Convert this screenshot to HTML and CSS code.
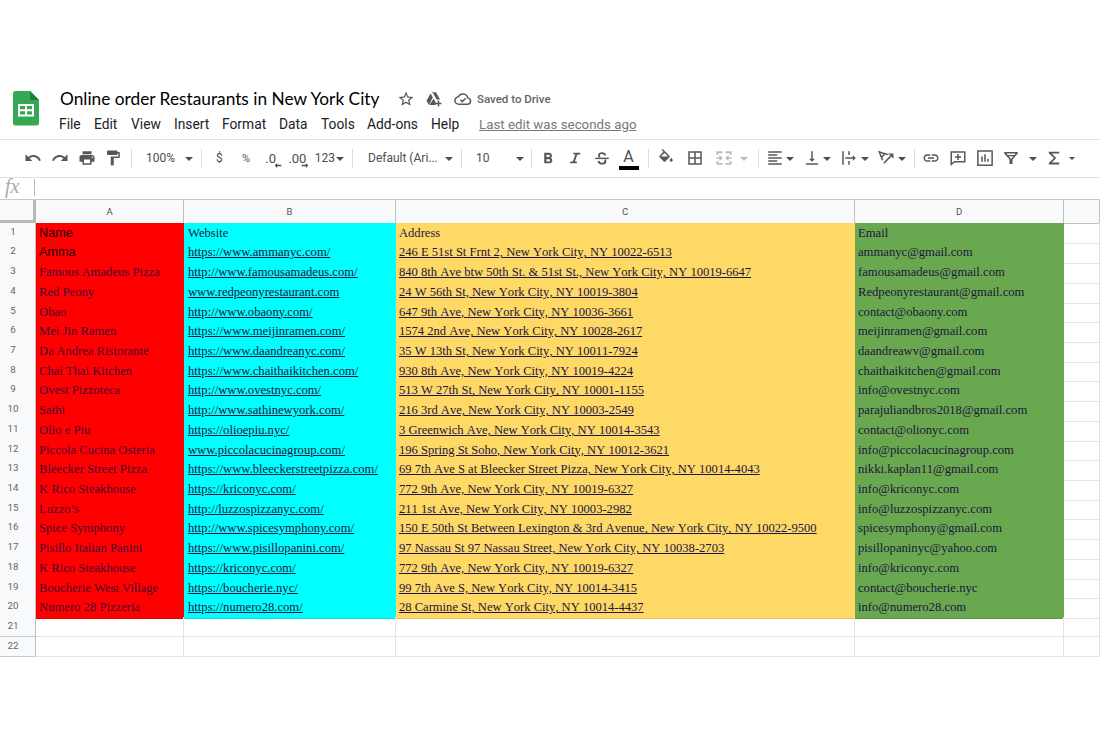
FILE: index.html
```html
<!DOCTYPE html>
<html lang="en">
<head>
    <meta charset="UTF-8">
    <meta name="viewport" content="width=device-width, initial-scale=1.0">
    <title>Online order Restaurants in New York City</title>
    <link rel="stylesheet" href="styles.css">
</head>
<body>
    <header class="doc-header">
        <svg class="logo" viewBox="0 0 26 35">
            <path fill="#34a853" d="M2.500 0H17l9 9v23a2.500 2.500 0 0 1-2.500 2.500h-21A2.500 2.500 0 0 1 0 32V2.500A2.500 2.500 0 0 1 2.500 0z"/>
            <path fill="#188038" d="M17 0l9 9h-7a2 2 0 0 1-2-2z"/>
            <path fill="#fff" fill-rule="evenodd" d="M5 13h16v12.500H5zM7 15v3.200h5V15zM14 15v3.200h5V15zM7 20.200v3.200h5v-3.200zM14 20.200v3.200h5v-3.200z"/>
        </svg>
        <div class="doc-info">
            <div class="title-row">
                <h1 class="title">Online order Restaurants in New York City</h1>
                <svg class="icon star" viewBox="0 0 24 24"><path d="M22 9.240l-7.190-.62L12 2 9.190 8.630 2 9.240l5.460 4.730L5.820 21 12 17.270 18.180 21l-1.630-7.030L22 9.240zM12 15.400l-3.760 2.270 1-4.280-3.320-2.880 4.380-.38L12 6.100l1.710 4.040 4.380.38-3.320 2.880 1 4.280L12 15.400z"/></svg>
                <svg class="icon drive" viewBox="0 0 24 24"><path d="M8.300 3h6.400l5.300 9.500h-4.500L10.800 4.300zM7.400 4.500l3.100 5.600L5.100 20 2 14.300zM11.500 11.700l2.600 4.300v4H6.500l-.4-.6zM17 14h2v3h3v2h-3v3h-2v-3h-3v-2h3z"/></svg>
                <svg class="icon cloud" viewBox="0 0 24 24"><path class="line" d="M18.500 19H6.500A5 5 0 0 1 6 9a6.500 6.500 0 0 1 12.300 1.500 4.300 4.300 0 0 1 .2 8.500zM8.500 13l2.500 2.500 4.500-4.500"/></svg>
                <span class="saved">Saved to Drive</span>
            </div>
            <nav class="menu">
                <span class="file">File</span>
                <span class="edit">Edit</span>
                <span class="view">View</span>
                <span class="insert">Insert</span>
                <span class="format">Format</span>
                <span class="data">Data</span>
                <span class="tools">Tools</span>
                <span class="addons">Add-ons</span>
                <span class="help">Help</span>
                <a class="last-edit">Last edit was seconds ago</a>
            </nav>
        </div>
    </header>

    <div class="toolbar">
        <div class="group history">
            <span class="tool"><svg class="icon" viewBox="0 0 24 24"><path d="M12.500 8c-2.650 0-5.050.99-6.900 2.600L2 7v9h9l-3.620-3.620c1.390-1.160 3.160-1.880 5.120-1.880 3.540 0 6.550 2.310 7.600 5.500l2.370-.78C21.080 11.030 17.150 8 12.500 8z"/></svg></span>
            <span class="tool"><svg class="icon" viewBox="0 0 24 24"><path d="M18.400 10.600C16.550 8.990 14.150 8 11.500 8c-4.650 0-8.580 3.030-9.960 7.220L3.900 16c1.050-3.190 4.050-5.500 7.600-5.500 1.950 0 3.730.72 5.120 1.880L13 16h9V7l-3.600 3.600z"/></svg></span>
            <span class="tool"><svg class="icon" viewBox="0 0 24 24"><path d="M19 8H5c-1.660 0-3 1.340-3 3v6h4v4h12v-4h4v-6c0-1.660-1.340-3-3-3zm-3 11H8v-5h8v5zm3-7c-.55 0-1-.45-1-1s.45-1 1-1 1 .45 1 1-.45 1-1 1zm-1-9H6v4h12V3z"/></svg></span>
            <span class="tool"><svg class="icon" viewBox="0 0 24 24"><path d="M18 4V3c0-.55-.45-1-1-1H5c-.55 0-1 .45-1 1v4c0 .55.45 1 1 1h12c.55 0 1-.45 1-1V6h1v4H9v11c0 .55.45 1 1 1h2c.55 0 1-.45 1-1v-9h8V4h-3z"/></svg></span>
        </div>
        <div class="group zoom">
            <span>100%</span>
            <i class="arrow"></i>
        </div>
        <div class="group number">
            <span class="tool">$</span>
            <span class="tool percent">%</span>
            <span class="tool decimal">.0<svg class="small-arrow less" viewBox="0 0 8 6"><path d="M0 3l3-3v2h5v2H3v2z"/></svg></span>
            <span class="tool decimal">.00<svg class="small-arrow more" viewBox="0 0 8 6"><path d="M8 3L5 0v2H0v2h5v2z"/></svg></span>
            <span class="more-formats">123</span>
            <i class="arrow"></i>
        </div>
        <div class="group font">
            <span>Default (Ari...</span>
            <i class="arrow"></i>
        </div>
        <div class="group size">
            <span>10</span>
            <i class="arrow"></i>
        </div>
        <div class="group text">
            <span class="tool"><svg class="icon" viewBox="0 0 24 24"><path d="M15.600 11.790c.97-.67 1.650-1.770 1.650-2.790 0-2.260-1.750-4-4-4H7v14h7.040c2.090 0 3.710-1.700 3.710-3.790 0-1.520-.86-2.820-2.150-3.420zM10 7.500h3c.83 0 1.500.67 1.500 1.500s-.67 1.500-1.500 1.500h-3v-3zm3.500 9H10v-3h3.500c.83 0 1.500.67 1.500 1.500s-.67 1.500-1.500 1.500z"/></svg></span>
            <span class="tool"><svg class="icon" viewBox="0 0 24 24"><path d="M10 5v2.300h2.500l-3.400 9.400H5.500V19h9v-2.300h-2.700l3.400-9.400H19V5z"/></svg></span>
            <span class="tool"><svg class="icon" viewBox="0 0 24 24"><path d="M3 11.500h18v2H3z"/><path class="bold-line" d="M16.500 8.500C16 6.500 14.500 5.500 12 5.500S7.800 6.600 7.800 8.400c0 1 .4 1.700 1.500 2.300M7.300 16c.4 2.200 2.100 3.500 4.800 3.500s4.500-1.200 4.500-3.200c0-.9-.3-1.600-.9-2.200"/></svg></span>
            <span class="tool text-color">A</span>
        </div>
        <div class="group cell">
            <span class="tool"><svg class="icon" viewBox="0 0 24 24"><path d="M16.560 8.940L7.620 0 6.210 1.410l2.380 2.380-5.150 5.150c-.59.59-.59 1.540 0 2.120l5.500 5.500c.29.29.68.44 1.060.44s.77-.15 1.060-.44l5.500-5.500c.59-.58.59-1.530 0-2.120zM5.210 10L10 5.210 14.790 10H5.210zM19 11.500s-2 2.170-2 3.500c0 1.100.9 2 2 2s2-.9 2-2c0-1.330-2-3.500-2-3.500z"/></svg></span>
            <span class="tool"><svg class="icon" viewBox="0 0 24 24"><path d="M3 3v18h18V3H3zm8 16H5v-6h6v6zm0-8H5V5h6v6zm8 8h-6v-6h6v6zm0-8h-6V5h6v6z"/></svg></span>
            <span class="tool disabled"><svg class="icon merge" viewBox="0 0 24 24"><path d="M2 3h8v2.500H4.500V8H2zM14 3h8v5h-2.500V5.500H14zM2 16h2.500v2.500H10V21H2zM19.500 16H22v5h-8v-2.500h5.500zM2 11h4V8l4.500 4L6 16v-3H2zM22 11h-4V8l-4.500 4 4.500 4v-3h4z"/></svg></span>
            <i class="arrow disabled"></i>
        </div>
        <div class="group align">
            <span class="tool"><svg class="icon" viewBox="0 0 24 24"><path d="M15 15H3v2h12v-2zm0-8H3v2h12V7zM3 13h18v-2H3v2zm0 8h18v-2H3v2zM3 3v2h18V3H3z"/></svg></span>
            <i class="arrow"></i>
            <span class="tool"><svg class="icon" viewBox="0 0 24 24"><path d="M16 13h-3V3h-2v10H8l4 4 4-4zM4 19v2h16v-2H4z"/></svg></span>
            <i class="arrow"></i>
            <span class="tool"><svg class="icon" viewBox="0 0 24 24"><path d="M3 3h2v18H3zM11 3h2v5h-2zM11 16h2v5h-2zM7 11h10V8l4 4-4 4v-3H7z"/></svg></span>
            <i class="arrow"></i>
            <span class="tool"><svg class="icon" viewBox="0 0 24 24"><path class="line" d="M7.500 15L3 4l12 3.500M6 11l5-5M9 19L19.500 8.500"/><path d="M15 6h7v7z"/></svg></span>
            <i class="arrow"></i>
        </div>
        <div class="group insert-tools">
            <span class="tool"><svg class="icon" viewBox="0 0 24 24"><path d="M3.900 12c0-1.710 1.390-3.100 3.100-3.100h4V7H7c-2.760 0-5 2.240-5 5s2.240 5 5 5h4v-1.900H7c-1.710 0-3.100-1.390-3.100-3.100zM8 13h8v-2H8v2zm9-6h-4v1.900h4c1.710 0 3.100 1.390 3.100 3.100s-1.390 3.100-3.100 3.100h-4V17h4c2.760 0 5-2.240 5-5s-2.240-5-5-5z"/></svg></span>
            <span class="tool"><svg class="icon" viewBox="0 0 24 24"><path class="line" d="M3 4h18v13H7.500L3 20.500zM12 6.500v8M8 10.500h8"/></svg></span>
            <span class="tool"><svg class="icon" viewBox="0 0 24 24"><path class="line" d="M2.500 2.500h19v19h-19zM8 10v7M12 7v10M16 13v4"/></svg></span>
            <span class="tool"><svg class="icon" viewBox="0 0 24 24"><path fill-rule="evenodd" d="M3 4h18v2l-7 8v6h-4v-6L3 6zM6 6l1.500 2h9L18 6zM9 9.800l3 3.400 3-3.400z"/></svg></span>
            <i class="arrow"></i>
            <span class="tool sum"><svg class="icon" viewBox="0 0 24 24"><path d="M19 3.500H5v2l7 6.500-7 6.500v2h14V18H9l6-6-6-6h10z"/></svg></span>
            <i class="arrow tiny"></i>
        </div>
    </div>

    <div class="formula-bar"><span class="fx">fx</span></div>

    <div class="sheet">
        <div class="row columns"><span class="corner"></span><span>A</span><span>B</span><span>C</span><span>D</span><span></span></div>
        <div class="row"><b>1</b><span class="name sans">Name</span><span class="site plain">Website</span><span class="address plain">Address</span><span class="email">Email</span><span></span></div>
        <div class="row"><b>2</b><span class="name sans">Amma</span><span class="site">https://www.ammanyc.com/</span><span class="address">246 E 51st St Frnt 2, New York City, NY 10022-6513</span><span class="email">ammanyc@gmail.com</span><span></span></div>
        <div class="row"><b>3</b><span class="name">Famous Amadeus Pizza</span><span class="site">http://www.famousamadeus.com/</span><span class="address">840 8th Ave btw 50th St. &amp; 51st St., New York City, NY 10019-6647</span><span class="email">famousamadeus@gmail.com</span><span></span></div>
        <div class="row"><b>4</b><span class="name">Red Peony</span><span class="site">www.redpeonyrestaurant.com</span><span class="address">24 W 56th St, New York City, NY 10019-3804</span><span class="email">Redpeonyrestaurant@gmail.com</span><span></span></div>
        <div class="row"><b>5</b><span class="name">Obao</span><span class="site">http://www.obaony.com/</span><span class="address">647 9th Ave, New York City, NY 10036-3661</span><span class="email">contact@obaony.com</span><span></span></div>
        <div class="row"><b>6</b><span class="name">Mei Jin Ramen</span><span class="site">https://www.meijinramen.com/</span><span class="address">1574 2nd Ave, New York City, NY 10028-2617</span><span class="email">meijinramen@gmail.com</span><span></span></div>
        <div class="row"><b>7</b><span class="name">Da Andrea Ristorante</span><span class="site">https://www.daandreanyc.com/</span><span class="address">35 W 13th St, New York City, NY 10011-7924</span><span class="email">daandreawv@gmail.com</span><span></span></div>
        <div class="row"><b>8</b><span class="name">Chai Thai Kitchen</span><span class="site">https://www.chaithaikitchen.com/</span><span class="address">930 8th Ave, New York City, NY 10019-4224</span><span class="email">chaithaikitchen@gmail.com</span><span></span></div>
        <div class="row"><b>9</b><span class="name">Ovest Pizzoteca</span><span class="site">http://www.ovestnyc.com/</span><span class="address">513 W 27th St, New York City, NY 10001-1155</span><span class="email">info@ovestnyc.com</span><span></span></div>
        <div class="row"><b>10</b><span class="name">Sathi</span><span class="site">http://www.sathinewyork.com/</span><span class="address">216 3rd Ave, New York City, NY 10003-2549</span><span class="email">parajuliandbros2018@gmail.com</span><span></span></div>
        <div class="row"><b>11</b><span class="name">Olio e Piu</span><span class="site">https://olioepiu.nyc/</span><span class="address">3 Greenwich Ave, New York City, NY 10014-3543</span><span class="email">contact@olionyc.com</span><span></span></div>
        <div class="row"><b>12</b><span class="name">Piccola Cucina Osteria</span><span class="site">www.piccolacucinagroup.com/</span><span class="address">196 Spring St Soho, New York City, NY 10012-3621</span><span class="email">info@piccolacucinagroup.com</span><span></span></div>
        <div class="row"><b>13</b><span class="name">Bleecker Street Pizza</span><span class="site">https://www.bleeckerstreetpizza.com/</span><span class="address">69 7th Ave S at Bleecker Street Pizza, New York City, NY 10014-4043</span><span class="email">nikki.kaplan11@gmail.com</span><span></span></div>
        <div class="row"><b>14</b><span class="name">K Rico Steakhouse</span><span class="site">https://kriconyc.com/</span><span class="address">772 9th Ave, New York City, NY 10019-6327</span><span class="email">info@kriconyc.com</span><span></span></div>
        <div class="row"><b>15</b><span class="name">Luzzo’s</span><span class="site">http://luzzospizzanyc.com/</span><span class="address">211 1st Ave, New York City, NY 10003-2982</span><span class="email">info@luzzospizzanyc.com</span><span></span></div>
        <div class="row"><b>16</b><span class="name">Spice Symphony</span><span class="site">http://www.spicesymphony.com/</span><span class="address">150 E 50th St Between Lexington &amp; 3rd Avenue, New York City, NY 10022-9500</span><span class="email">spicesymphony@gmail.com</span><span></span></div>
        <div class="row"><b>17</b><span class="name">Pisillo Italian Panini</span><span class="site">https://www.pisillopanini.com/</span><span class="address">97 Nassau St 97 Nassau Street, New York City, NY 10038-2703</span><span class="email">pisillopaninyc@yahoo.com</span><span></span></div>
        <div class="row"><b>18</b><span class="name">K Rico Steakhouse</span><span class="site">https://kriconyc.com/</span><span class="address">772 9th Ave, New York City, NY 10019-6327</span><span class="email">info@kriconyc.com</span><span></span></div>
        <div class="row"><b>19</b><span class="name">Boucherie West Village</span><span class="site">https://boucherie.nyc/</span><span class="address">99 7th Ave S, New York City, NY 10014-3415</span><span class="email">contact@boucherie.nyc</span><span></span></div>
        <div class="row"><b>20</b><span class="name">Numero 28 Pizzeria</span><span class="site">https://numero28.com/</span><span class="address">28 Carmine St, New York City, NY 10014-4437</span><span class="email">info@numero28.com</span><span></span></div>
        <div class="row"><b>21</b><span></span><span></span><span></span><span></span><span></span></div>
        <div class="row"><b>22</b><span></span><span></span><span></span><span></span><span></span></div>
    </div>
</body>
</html>
```
FILE: styles.css
```css
* {
    box-sizing: border-box;
}
body {
    margin: 0;
    padding-top: 85px;
    height: 740px;
    overflow: hidden;
    background-color: #fff;
    font-family: Roboto, Arial, sans-serif;
    color: #202124;
}
.icon {
    width: 18px;
    height: 18px;
    flex: none;
    fill: #54585c;
}
.line {
    fill: none;
    stroke: #54585c;
    stroke-width: 2;
}
.bold-line {
    fill: none;
    stroke: #54585c;
    stroke-width: 2.5;
}

/* title and menus */
.doc-header {
    display: flex;
    height: 54px;
    padding-left: 13px;
}
.logo {
    width: 26px;
    height: 35px;
    margin-top: 6px;
}
.doc-info {
    margin-left: 20px;
}
.title-row {
    display: flex;
    align-items: center;
    height: 28px;
    padding-left: 1px;
}
.title {
    width: 320px;
    margin: 0;
    padding-bottom: 2px;
    font-family: Lato, sans-serif;
    font-size: 17.3px;
    font-weight: 400;
    color: #000;
    white-space: nowrap;
}
.star {
    margin-left: 17px;
}
.drive {
    margin-left: 10px;
}
.cloud {
    margin-left: 11px;
}
.saved {
    margin-left: 5px;
    font-size: 11.5px;
    font-weight: 500;
    color: #5f6368;
    white-space: nowrap;
}
.menu {
    display: flex;
    height: 23px;
    line-height: 23px;
    font-size: 13.8px;
    white-space: nowrap;
}
.file { width: 35px; }
.edit { width: 37px; }
.view { width: 43px; }
.insert { width: 48px; }
.format { width: 57px; }
.data { width: 42px; }
.tools { width: 46px; }
.addons { width: 64px; }
.help { width: 48px; }
.last-edit {
    font-size: 13.3px;
    color: #777;
    text-decoration: underline;
}

/* toolbar */
.toolbar {
    display: flex;
    align-items: center;
    height: 39px;
    padding-bottom: 1px;
    border-top: 1px solid #dfe1e3;
    border-bottom: 1px solid #dfe1e3;
    font-size: 12px;
    color: #4a4e52;
}
.group {
    display: flex;
    align-items: center;
    height: 19px;
    border-right: 1px solid #dadce0;
    white-space: nowrap;
}
.tool {
    display: flex;
    align-items: center;
    justify-content: center;
    flex: none;
    width: 26.7px;
    height: 20px;
}
.arrow {
    flex: none;
    width: 0;
    height: 0;
    margin-top: 1px;
    border: 4px solid transparent;
    border-top-color: #4a4e52;
    border-bottom: 0;
}
.arrow.disabled {
    margin-left: 2px;
    border-top-color: #b8babd;
}
.arrow.tiny {
    border-width: 3px 3px 0;
}
.disabled .icon {
    fill: #b8babd;
}
.history {
    width: 132px;
    padding-left: 20px;
}
.zoom {
    width: 70px;
    justify-content: space-between;
    padding: 0 8px 0 14px;
}
.number {
    width: 151px;
    padding-left: 4px;
}
.percent {
    font-size: 11px;
}
.decimal {
    position: relative;
    padding-right: 4px;
    font-size: 13px;
}
.small-arrow {
    position: absolute;
    bottom: 0;
    width: 8px;
    height: 5px;
    fill: #4a4e52;
}
.less {
    right: 4px;
}
.more {
    right: 4px;
}
.more-formats {
    width: 21px;
    margin-left: 2px;
}
.font {
    width: 109px;
    justify-content: space-between;
    padding: 0 8px 0 15px;
}
.size {
    width: 70px;
    justify-content: space-between;
    padding: 0 7px 0 14px;
}
.text {
    width: 117px;
    padding-left: 3px;
}
.text-color {
    position: relative;
    padding-bottom: 3px;
    font-size: 16px;
}
.text-color::after {
    content: "";
    position: absolute;
    left: 4px;
    right: 3px;
    bottom: -2px;
    height: 4px;
    background-color: #000;
}
.cell {
    width: 110px;
    padding-left: 3px;
}
.cell .tool {
    width: 28.7px;
}
.align {
    width: 156px;
    padding-left: 4px;
}
.align .tool {
    width: 23.2px;
}
.align .arrow {
    margin-right: 6px;
}
.insert-tools {
    border-right: 0;
    padding-left: 3px;
}
.insert-tools .arrow {
    margin-left: 4px;
}
.sum {
    margin-left: 4px;
}
.insert-tools .tiny {
    margin-left: 2px;
}

/* formula bar */
.formula-bar {
    display: flex;
    align-items: center;
    height: 21px;
}
.fx {
    width: 35px;
    height: 17px;
    margin-bottom: 2px;
    padding-left: 5px;
    border-right: 1px solid #bbb;
    font-family: "Liberation Serif", serif;
    font-size: 20px;
    line-height: 14px;
    font-style: italic;
    color: #aaa;
}

/* sheet */
.sheet {
    border-top: 1px solid #c6c8ca;
}
.row {
    display: grid;
    grid-template-columns: 36px 148px 212px 459px 209px 36px;
    height: 19.73px;
    line-height: 20.7px;
    font-family: "Liberation Serif", serif;
    font-size: 12.65px;
    color: #1c1640;
}
.row span {
    padding-left: 3px;
    border-right: 1px solid #e2e3e3;
    border-bottom: 1px solid #e2e3e3;
    white-space: nowrap;
}
.row b {
    padding-right: 9px;
    border-right: 1px solid #c0c0c0;
    border-bottom: 1px solid #c8cacc;
    background-color: #f8f9fa;
    font: 400 9.8px/18px Roboto, sans-serif;
    text-align: center;
    color: #666;
}
.row.columns {
    height: 22.7px;
}
.row.columns span {
    padding: 0;
    border-color: #c0c0c0;
    background-color: #f8f9fa;
    font: 400 9.5px/23px Roboto, sans-serif;
    text-align: center;
    color: #555;
}
.row.columns .corner {
    border-right: 3px solid #b7b7b7;
    border-bottom: 4px solid #b7b7b7;
}
.row .name,
.row .site,
.row .address,
.row .email {
    border-right: 0;
    border-color: rgba(0, 0, 0, 0.1);
}
.name {
    background-color: #f00;
    color: #480830;
}
.row .sans {
    font-family: "Liberation Sans", sans-serif;
    color: #200;
}
.site {
    background-color: #0ff;
    text-decoration: underline;
}
.row .site {
    padding-left: 4px;
    font-size: 12.63px;
}
.address {
    background-color: #ffd966;
    text-decoration: underline;
    font-size: 12.57px;
    font-kerning: none;
}
.email {
    background-color: #6aa84f;
}
.row .plain {
    text-decoration: none;
}
```
